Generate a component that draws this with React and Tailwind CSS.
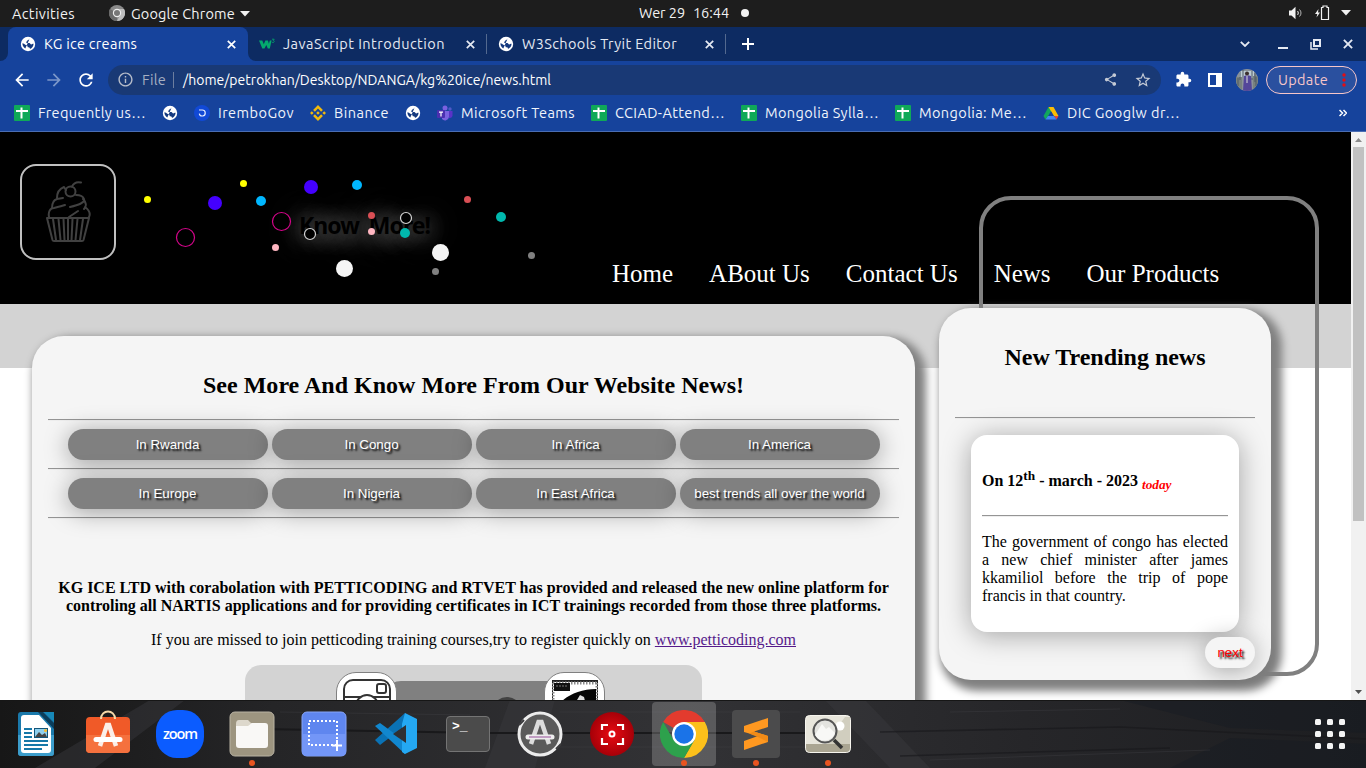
import React, { useLayoutEffect, useRef } from 'react';
import { MdShare, MdStarBorder, MdExtension, MdArrowBack, MdArrowForward, MdRefresh, MdInfoOutline } from 'react-icons/md';
import { SiBinance } from 'react-icons/si';

// Single line of text whose letter spacing is tuned to fill a set width.
function Fit({ w, className = '', children }) {
  const ref = useRef(null);
  useLayoutEffect(() => {
    const el = ref.current;
    el.style.letterSpacing = '0px';
    const n = el.textContent.length;
    el.style.letterSpacing = (w - el.getBoundingClientRect().width) / n + 'px';
  }, [w, children]);
  return (
    <span className="block shrink-0" style={{ width: w }}>
      <span ref={ref} className={'inline-block whitespace-pre ' + className}>{children}</span>
    </span>
  );
}

function Globe({ className = '' }) {
  return (
    <svg className={className} width="16" height="16" viewBox="0 0 16 16">
      <circle cx="8" cy="8" r="7.200" fill="#fff" />
      <path d="M9.800 2.200c0 1.200-.9 1.500-1.800 1.900-.8.400-.6 1.200-1.300 1.500-.8.300-.6 1.100 0 1.300h2.600c1 .1 1 1.500 2 1.500.8 0 1.200-.7 2.300-.6-.1 2.300-1.600 4.400-3.700 5.300.3-1.200-.5-1.700-1.400-1.800-.9 0-1-.7-1-1.400 0-.8-1.400-.5-2.200-1.200-.9-.8-1.600-1.300-2.900-1.500 0 2.400 1.100 4.200 2.900 5.200" fill="#14397f" />
    </svg>
  );
}

function Cross({ size = 9, className = '' }) {
  return (
    <svg className={className} width={size} height={size} viewBox="0 0 9 9" fill="none" stroke="currentColor" strokeWidth="1.700"><path d="M.8.8l7.400 7.400M8.200.8L.8 8.200" /></svg>
  );
}

function TopBar() {
  return (
    <header className="relative flex h-[27px] shrink-0 items-center bg-[#1d1d1d] text-[14.5px] text-[#f2f2f2]">
      <div className="w-3" />
      <Fit w={63}>Activities</Fit>
      <svg className="mb-px ml-[34px] mr-1.5" width="16" height="16" viewBox="0 0 16 16">
        <circle cx="8" cy="8" r="8" fill="#8a8a8a" />
        <path d="M8 8 L1 4 A8 8 0 0 0 8 16Z" fill="#6b6b6b" />
        <path d="M8 4h7a8 8 0 0 1-7 12l3-6z" fill="#bdbdbd" />
        <circle cx="8" cy="8" r="4.2" fill="#eee" />
        <circle cx="8" cy="8" r="3" fill="#777" />
      </svg>
      <Fit w={104}>Google Chrome</Fit>
      <svg className="ml-[5px]" width="10" height="6"><path d="M0 0h10L5 5.5z" fill="#f2f2f2" /></svg>
      <div className="ml-[389px] flex items-center pb-[2px]">
        <Fit w={46}>Wer 29</Fit>
        <div className="w-2" />
        <Fit w={36}>16:44</Fit>
        <div className="ml-3 size-2 rounded-full bg-[#f2f2f2]" />
      </div>
      <div className="ml-auto flex items-center pb-px pr-[15px]">
        <svg className="mr-[11px]" width="16" height="14" viewBox="0 0 16 14" fill="none" stroke="#f2f2f2">
          <path d="M1 4.500h2.500L7.500 .8v12.400L3.500 9.500H1z" fill="#f2f2f2" stroke="none" />
          <path d="M9.500 5c1 1 1 3 0 4" /><path d="M11.500 3.500c2 2 2 5 0 7" stroke="#b5b5b5" />
        </svg>
        <svg width="16" height="16" viewBox="0 0 16 16" className="mr-2.5">
          <path d="M3.500 4L0 9h2.300L1.500 12.500 5 7.500H3z" fill="#f2f2f2" />
          <path d="M6.500 2.500h1.500v-1.500h4v1.500h1.500v12h-7z" fill="none" stroke="#f2f2f2" strokeWidth="1.200" />
        </svg>
        <svg width="10" height="6"><path d="M0 0h10L5 5.5z" fill="#f2f2f2" /></svg>
      </div>
    </header>
  );
}

function W3() {
  return (
    <svg className="shrink-0" width="16" height="16" viewBox="0 0 16 16">
      <path d="M0 4.500h3.300l1.500 3.800 1.600-3.800h2.500l1 3.300.9-3.300h1.800l-1.800 8H8.800L7.300 9l-1.800 3.500H3.300z" fill="#04aa6d" />
      <path d="M13 3.200h2.200l-1 1.300c1.400 0 1.400 2-.2 2-.6 0-.9-.2-1-.5" fill="none" stroke="#04aa6d" strokeWidth=".8" />
    </svg>
  );
}

function Tab({ icon, title, w, active }) {
  return (
    <div className={active
      ? 'flex h-[34px] w-[240px] items-center rounded-t-lg bg-[#16439c] pl-[12px] text-white'
      : 'flex h-[34px] w-[239px] items-center pl-[11px] text-[#e4e9f2]'}>
      <div className="mr-2 flex w-4 shrink-0 justify-center">{icon}</div>
      <Fit w={w} className="pb-[2px] text-[14.5px]">{title}</Fit>
      <Cross className="ml-auto mr-3" />
    </div>
  );
}

function TabStrip() {
  return (
    <div className="flex h-[34px] shrink-0 items-center bg-[#0d2b62] text-[#e4e9f2]">
      <div className="h-full w-2 bg-[#16439c]"><div className="h-full rounded-br-lg bg-[#0d2b62]" /></div>
      <Tab active icon={<Globe />} title="KG ice creams" w={93} />
      <div className="-mr-2 h-full w-2 bg-[#16439c]"><div className="h-full rounded-bl-lg bg-[#0d2b62]" /></div>
      <Tab icon={<W3 />} title="JavaScript Introduction" w={162} />
      <div className="-ml-px h-5 w-px bg-[#53698f]" />
      <Tab icon={<Globe />} title="W3Schools Tryit Editor" w={155} />
      <div className="-ml-px h-5 w-px bg-[#53698f]" />
      <svg className="ml-4" width="12" height="12"><path d="M6 0v12M0 6h12" stroke="#fff" strokeWidth="2" /></svg>
      <div className="ml-auto flex items-center pr-[13px]">
        <svg className="mr-[28px]" width="10" height="6" fill="none" stroke="#e4e9f2" strokeWidth="1.800"><path d="M.8.8L5 5 9.200.8" /></svg>
        <div className="mr-[22px] mt-2 h-[2px] w-[10px] bg-[#e4e9f2]" />
        <svg className="mr-[22px]" width="11" height="11" viewBox="0 0 11 11" fill="none" stroke="#e4e9f2" strokeWidth="2">
          <path d="M4 1h6v6H4z" /><path d="M1 3v7h7" strokeWidth="1.500" />
        </svg>
        <Cross size={10} />
      </div>
    </div>
  );
}

function Toolbar() {
  return (
    <div className="flex h-[37px] shrink-0 items-center bg-[#16439c] pl-3 text-[14.5px] text-white">
      <MdArrowBack size={20} />
      <MdArrowForward className="ml-3" size={20} color="#7c97c9" />
      <MdRefresh className="ml-3" size={20} />
      <div className="ml-3 flex h-[30px] w-[1053px] items-center rounded-full bg-[#193975] pl-[9px]">
        <MdInfoOutline size={17} color="#b7bdca" />
        <div className="w-2" />
        <Fit w={24} className="text-[#a5afc2]">File</Fit>
        <div className="ml-[7px] mr-[9px] h-4 w-px bg-[#6c7e9f]" />
        <Fit w={368} className="text-sm">/home/petrokhan/Desktop/NDANGA/kg%20ice/news.html</Fit>
        <MdShare className="ml-auto mr-4" size={15} color="#c4cad5" />
        <MdStarBorder className="mr-[9px]" size={18} color="#c4cad5" />
      </div>
      <MdExtension className="ml-[14px]" size={17} />
      <svg className="ml-[15px]" width="15" height="14"><path d="M1 0h14v14H1zM3 2v10h6V2z" fill="#fff" fillRule="evenodd" /></svg>
      <svg className="ml-[14px]" width="22" height="22" viewBox="0 0 22 22">
        <defs><clipPath id="av"><circle cx="11" cy="11" r="11" /></clipPath></defs>
        <g clipPath="url(#av)">
          <path d="M0 0h22v22H0z" fill="#8b9299" />
          <path d="M3 2h15v7H3z" fill="#bccbd2" />
          <path d="M0 8h6v14H0zM17 7h5v15h-5z" fill="#78827f" />
          <path d="M4 2v9M7 1v8M16 2v9M19 4v9M2 9v8M20 8v9" stroke="#4e5964" />
          <path d="M8 7l3-1 4 1 1 15H7z" fill="#54469a" />
          <path d="M11 6v8" stroke="#ddd" />
          <circle cx="11" cy="4.500" r="2" fill="#3b2d2c" />
        </g>
      </svg>
      <div className="ml-2 flex h-7 w-[91px] shrink-0 items-center rounded-full border border-[#f6c6c9] bg-[#2a509f] pl-[11px] text-[#f6c6c9]">
        <Fit w={50}>Update</Fit>
        <svg className="ml-[14px] shrink-0" width="4" height="14" fill="#e30d14"><circle cx="2" cy="2" r="1.700" /><circle cx="2" cy="7" r="1.700" /><circle cx="2" cy="12" r="1.700" /></svg>
      </div>
    </div>
  );
}

const Sheet = () => (
  <svg width="16" height="16"><rect width="16" height="16" rx="1" fill="#0fa958" /><path d="M2 6h12M7.500 2.500v11" stroke="#fff" strokeWidth="2" /></svg>
);
const Drive = () => (
  <svg width="16" height="16" viewBox="0 0 16 16">
    <path d="M5.500 2h5L5 11.500l-2.500 3L.5 11z" fill="#11a75c" />
    <path d="M5.500 2h5l5 9h-4.500z" fill="#fbbc04" />
    <path d="M11 11h4.500l-2 3.500z" fill="#ea4335" />
    <path d="M5 11h6l2.500 3.500h-11z" fill="#4285f4" />
    <path d="M8 6.500L10.500 11h-5z" fill="#16439c" />
  </svg>
);
const Teams = () => (
  <svg width="16" height="16" viewBox="0 0 16 16">
    <circle cx="8" cy="3" r="2.500" fill="#7b61e0" /><circle cx="13" cy="4" r="1.700" fill="#5059c9" />
    <path d="M5 6h7v6a4 4 0 0 1-7 2z" fill="#7b61e0" /><path d="M12 6h3.500v5a3 3 0 0 1-3.500 2z" fill="#5a33c8" />
    <rect x="0" y="5" width="8" height="8" rx="1" fill="#4b2fb0" /><path d="M2 7.200h4M4 7v4.500" stroke="#fff" strokeWidth="1.200" />
  </svg>
);
const Irembo = () => (
  <svg width="16" height="16" viewBox="0 0 16 16"><circle cx="8" cy="8" r="8" fill="#1149d6" /><path d="M5 5h3.200a3 3 0 1 1-2.900 3.600" fill="none" stroke="#e6edff" strokeWidth="1.200" /></svg>
);

const bookmarks = [
  [<Sheet />, 'Frequently us…', 108],
  [<Globe />],
  [<Irembo />, 'IremboGov', 76],
  [<SiBinance size={16} color="#f3ba0b" />, 'Binance', 55],
  [<Globe />],
  [<Teams />, 'Microsoft Teams', 114],
  [<Sheet />, 'CCIAD-Attend…', 110],
  [<Sheet />, 'Mongolia Sylla…', 114],
  [<Sheet />, 'Mongolia: Me…', 108],
  [<Drive />, 'DIC Googlw dr…', 113],
];

function Bookmarks() {
  return (
    <div className="flex h-[34px] shrink-0 items-center gap-4 border-b border-[#4a6db3] bg-[#16439c] pb-[3px] pl-[14px] text-[14.5px] text-[#f0f4fb]">
      {bookmarks.map(([icon, label, w], i) => (
        <div key={i} className="flex shrink-0 items-center gap-2">{icon}{label && <Fit w={w}>{label}</Fit>}</div>
      ))}
      <svg className="ml-auto mr-[19px]" width="8" height="8" viewBox="0 0 8 8" fill="none" stroke="#fff" strokeWidth="1.500"><path d="M.5 1l3 3-3 3M4.500 1l3 3-3 3" /></svg>
    </div>
  );
}

const dots = [
  [147.5, 67.5, 3.5, '#ffff00'], [243.5, 51.5, 3.5, '#ffff00'],
  [215, 71, 7, '#4400ff'], [311, 55, 7, '#4400ff'],
  [261, 69, 5, '#00b7ff'], [357, 53, 5, '#00b7ff'],
  [275.5, 115.5, 3.5, '#ffb6c1'], [371.5, 99.5, 3.5, '#ffb6c1'],
  [371.5, 83.5, 3.5, '#d94f55'], [467.5, 67.5, 3.5, '#d94f55'],
  [405, 101, 5, '#00b8ad'], [501, 85, 5, '#00b8ad'],
  [344.5, 136.5, 8.5, '#f5f5f5'], [440.5, 120.5, 8.5, '#f5f5f5'],
  [435.5, 139.5, 3.5, '#808080'], [531.5, 123.5, 3.5, '#808080'],
];
const rings = [[185.5, 105.5, 9, '#d4058a'], [281.5, 89.5, 9, '#d4058a'], [310, 102, 5.5, '#d3d3d3'], [406, 86, 5.5, '#d3d3d3']];

function SiteHeader() {
  return (
    <div className="relative flex h-[172px] shrink-0 bg-black pl-5 pt-8">
      <div className="flex size-24 items-center justify-center rounded-2xl border-2 border-[#c0c0c0]">
        <svg width="46" height="62" viewBox="0 0 46 62" fill="none" stroke="#414141" strokeWidth="2" strokeLinecap="round" strokeLinejoin="round">
          <path d="M2 37h42l-5.500 22q-.3 1-1.500 1H9q-1.200 0-1.500-1zM8 38l3 21M13.500 38l2 21M18.500 38l1 21M23 38v21M27.500 38l-1 21M32.500 38l-2 21M38 38l-3 21" />
          <path d="M4 36c-1-5 1-9 5-9 4-1 8-2 11-3M7 27c0-5 2-8 5-9l6-1M12 17c0-4 2-9 7-11l2 3M31 14c3 0 7 1 8 4 1 4-6 6-14 8M38 18c3 3 4 7 1 10M40 26c4 3 6 6 4 10M33 30l-9 6" />
          <circle cx="25.500" cy="10.500" r="5" /><path d="M27 5.500c2-4 5-5 9-4" />
        </svg>
      </div>
      <div className="ml-[183px] mt-[45px]">
        <Fit w={131} className="font-['Comic_Sans_MS','Noto_Sans',sans-serif] text-[23px] font-bold leading-8 text-black [text-shadow:0_2px_22px_#888,0_2px_34px_#666] [word-spacing:5px]">Know More!</Fit>
      </div>
      <svg className="absolute left-0 top-0" width="600" height="172">
        {dots.map(([x, y, r, c], i) => <circle key={i} cx={x} cy={y} r={r} fill={c} />)}
        {rings.map(([x, y, r, c], i) => <circle key={i} cx={x} cy={y} r={r} fill="#000" stroke={c} strokeWidth="1.200" />)}
      </svg>
      <nav className="ml-[182px] mt-[95px] flex gap-9 whitespace-nowrap font-['Liberation_Serif',serif] text-[25px] leading-[29px] text-white">
        <span>Home</span><span>ABout Us</span><span>Contact Us</span><span>News</span><span>Our Products</span>
      </nav>
    </div>
  );
}

const Hr = () => <div className="h-[2px] w-full border-b border-t border-b-[#eeeeee] border-t-[#959595]" />;

function Pill({ children }) {
  return (
    <button className="h-[31px] w-[200px] rounded-2xl bg-[#808080] pr-px font-['Liberation_Sans',sans-serif] text-[13.333px] text-white shadow-[0_3px_24px_rgba(0,0,0,0.36)] [text-shadow:2px_2px_2px_black]">{children}</button>
  );
}

function NewsPanel() {
  return (
    <section className="-mt-8 h-[500px] w-[883px] shrink-0 rounded-t-[32px] bg-[#f5f5f5] px-4 shadow-[6px_6px_8px_5px_gray]">
      <h2 className="flex h-[83px] items-center justify-center pt-[14px] text-2xl font-bold"><Fit w={541}>See More And Know More From Our Website News!</Fit></h2>
      <Hr />
      <div className="flex h-[47px] items-center gap-1 pl-5"><Pill>In Rwanda</Pill><Pill>In Congo</Pill><Pill>In Africa</Pill><Pill>In America</Pill></div>
      <Hr />
      <div className="flex h-[47px] items-center gap-1 pl-5"><Pill>In Europe</Pill><Pill>In Nigeria</Pill><Pill>In East Africa</Pill><Pill>best trends all over the world</Pill></div>
      <Hr />
      <p className="mt-[60px] text-center text-base font-bold leading-[18px]">KG ICE LTD with corabolation with PETTICODING and RTVET has provided and released the new online platform for<br />controling all NARTIS applications and for providing certificates in ICT trainings recorded from those three platforms.</p>
      <p className="mt-4 text-center text-base leading-[18px]">If you are missed to join petticoding training courses,try to register quickly on <span className="text-[#551a8b] underline">www.petticoding.com</span></p>
      <div className="mx-auto mt-4 flex h-24 w-[457px] rounded-t-2xl bg-[#d3d3d3] pl-[91px] pt-[7px]">
        <div className="z-10 size-[61px] shrink-0 rounded-[20px] border border-[#808080] bg-white p-[6px]">
          <svg width="48" height="48" viewBox="0 0 48 48" fill="none" stroke="#333" strokeWidth="2">
            <rect x="1" y="1" width="46" height="46" rx="9" /><path d="M1 18h46" /><rect x="34" y="5" width="9" height="9" rx="2" /><circle cx="24" cy="27" r="11" fill="#fff" />
          </svg>
        </div>
        <svg className="-mx-1 mt-[9px] shrink-0" width="155" height="60"><path d="M0 2q3-2 8-2h147v60H0z" fill="#808080" /><circle cx="114" cy="31" r="15" fill="#424242" /></svg>
        <div className="z-10 size-[61px] shrink-0 rounded-[20px] border border-[#808080] bg-white p-[7px]">
          <svg width="46" height="46" viewBox="0 0 46 46">
            <path d="M0 1h46v45H0z" fill="#fff" stroke="#222" strokeWidth="2" />
            <path d="M1 3h44M1 3v43M45 3v43" stroke="#888" strokeWidth="3" strokeDasharray="1.500 1.500" />
            <path d="M2 3h16v8H2z" fill="#111" /><path d="M4 6h12" stroke="#777" strokeDasharray="2 1" />
            <path d="M9 22C17 14 30 9 44 9v18H8z" fill="#050505" /><path d="M25 20l3-5 4 2 1 4z" fill="#ddd" />
          </svg>
        </div>
      </div>
    </section>
  );
}

function TrendingPanel() {
  return (
    <aside className="z-10 -mt-[60px] ml-6 h-[372px] w-[332px] shrink-0 rounded-[32px] bg-[#f5f5f5] pl-4 shadow-[6px_6px_8px_5px_gray]">
      <h2 className="flex h-[109px] w-[300px] items-center justify-center pb-[11px] text-2xl font-bold"><Fit w={201}>New Trending news</Fit></h2>
      <div className="w-[300px]"><Hr /></div>
      <div className="ml-4 mt-4 h-[197px] w-[268px] rounded-2xl bg-white px-[11px] pt-[32px] shadow-[0_3px_28px_rgba(0,0,0,0.34)]">
        <h3 className="h-[48px] whitespace-nowrap text-base font-bold leading-7">On 12<sup className="top-[-0.45em] text-[13.3px]">th</sup> - march - 2023 <sub className="text-[13.3px] italic text-[#ff0000]">today</sub></h3>
        <Hr />
        <p className="mt-4 text-justify text-base leading-[18px]">The government of congo has elected a new chief minister after james kkamiliol before the trip of pope francis in that country.</p>
      </div>
      <button className="ml-[250px] mt-[5px] block h-[31px] w-[50px] rounded-2xl bg-[#f5f5f5] font-['Liberation_Sans',sans-serif] text-[13.333px] text-[#ff0000] shadow-[0_3px_24px_rgba(0,0,0,0.33)] [text-shadow:2px_2px_2px_black]">next</button>
    </aside>
  );
}

function Page() {
  return (
    <main className="flex h-[568px] shrink-0 overflow-hidden bg-white font-['Liberation_Serif',serif] text-black">
      <div className="relative flex w-[1351px] flex-col overflow-hidden">
        <SiteHeader />
        <div className="h-16 shrink-0 bg-[#d3d3d3]" />
        <div className="absolute left-[979px] top-[64px] h-[480px] w-[340px] rounded-[32px] border-4 border-[#808080]" />
        <div className="z-10 flex items-start pl-8">
          <NewsPanel />
          <TrendingPanel />
        </div>
      </div>
      <div className="flex w-[15px] flex-col items-center bg-[#f1f1f1]">
        <svg width="15" height="15"><path d="M4 10h7L7.500 6z" fill="#8a8a8a" /></svg>
        <div className="h-[374px] w-[11px] bg-[#c1c1c1]" />
        <svg className="mt-auto" width="15" height="15"><path d="M4 5h7l-3.500 4z" fill="#505050" /></svg>
      </div>
    </main>
  );
}

const Writer = () => (
  <svg width="36" height="44" viewBox="0 0 36 44">
    <rect width="36" height="44" rx="3" fill="#1a79ab" /><path d="M0 23h36v18q0 3-3 3H3q-3 0-3-3z" fill="#3c9dcb" />
    <path d="M3 6q0-3 3-3h15l12 13v22q0 3-3 3H6q-3 0-3-3z" fill="#fff" /><path d="M20 0l16 17V11L25 0z" fill="#0b3d5b" /><path d="M26 0h10v10z" fill="#1788b8" />
    <path d="M6 17h8M6 21h8M6 25h8M6 29h24M6 33h24M6 37h18" stroke="#1678a8" strokeWidth="2" />
    <rect x="16.500" y="16.500" width="13" height="9" fill="#8fd0ee" stroke="#12557a" /><path d="M17 25l4-5 3 3 3-2 2 4z" fill="#444" /><circle cx="27.500" cy="18.500" r="1.500" fill="#f8b92b" />
  </svg>
);
const Software = () => (
  <svg className="-mt-1" width="46" height="44" viewBox="0 0 46 44">
    <rect x="1" y="7" width="44" height="36" rx="4" fill="#f05a28" /><path d="M1 25h44v14q0 4-4 4H5q-4 0-4-4z" fill="#f5713e" />
    <path d="M16 9c0-10 14-10 14 0" fill="none" stroke="#f6d9a8" strokeWidth="2" />
    <path d="M15 36l7-21h2l7 21" fill="none" stroke="#fbeee8" strokeWidth="4.500" /><path d="M11 29.500h24" stroke="#fff" strokeWidth="5" strokeLinecap="round" />
  </svg>
);
const Zoom = () => (
  <div className="flex size-12 items-center justify-center rounded-[21px] bg-[#0b5cff] pb-0.5 font-['Open_Sans',sans-serif]"><Fit w={34} className="text-[14.5px] font-semibold leading-4 text-white">zoom</Fit></div>
);
const Files = () => (
  <svg width="46" height="46" viewBox="0 0 46 46"><rect x="1" y="1" width="44" height="44" rx="5" fill="#9d9580" stroke="#b9b3a3" />
    <path d="M7 13q0-4 3-4h9l3 3h14v6H7z" fill="#ddd8cc" /><path d="M7 15h12l4-3h13q3 0 3 3v19q0 3-3 3H10q-3 0-3-3z" fill="#f9f8f6" /></svg>
);
const Capture = () => (
  <svg width="46" height="46" viewBox="0 0 46 46"><rect x="1" y="1" width="44" height="44" rx="5" fill="#5f86ef" stroke="#87a5f8" /><path d="M1 23h44v18q0 4-4 4H5q-4 0-4-4z" fill="#7396f7" />
    <rect x="8" y="10" width="28" height="24" fill="none" stroke="#fff" strokeWidth="2" strokeDasharray="2 2" /><path d="M36 29v11M31 34.500h10" stroke="#fff" strokeWidth="2" /></svg>
);
const Code = () => (
  <svg width="44" height="44" viewBox="0 0 44 44"><path d="M1 28L31 1l1 12L6 33z" fill="#0a72b5" /><path d="M1 14l5-3 26 19-1 12z" fill="#1187cf" /><path d="M31 1l12 6v29l-12 6-3-2V12z" fill="#24a8f2" /><path d="M32 13v18L19 22z" fill="#303033" /></svg>
);
const Term = () => (
  <div className="flex h-9 w-11 rounded border border-[#747474] bg-[#4b4b4b] pl-[5px] pt-0.5 font-['Liberation_Mono',monospace] text-[13px] font-bold leading-4 text-white">&gt;_</div>
);
const Updater = () => (
  <svg width="46" height="46" viewBox="0 0 46 46"><circle cx="23" cy="23" r="21" fill="#5a5a5a" stroke="#ececec" strokeWidth="3" /><path d="M2 14l5-5M39 38l5-5" stroke="#3b3b3d" strokeWidth="2" /><path d="M14 33l7.500-22h3l7.500 22" fill="none" stroke="#ddd" strokeWidth="4.500" /><path d="M11 26h24" stroke="#eee" strokeWidth="5" strokeLinecap="round" /><path d="M12 26h22" stroke="#954f99" /></svg>
);
const Recorder = () => (
  <svg width="44" height="44" viewBox="0 0 44 44"><defs><radialGradient id="rg"><stop offset="0" stopColor="#e80b12" /><stop offset="1" stopColor="#a60008" /></radialGradient></defs><circle cx="22" cy="22" r="22" fill="url(#rg)" />
    <path d="M12 18v-5h6M27 13h6v5M33 26v6h-6M18 32h-6v-6" fill="none" stroke="#fff" strokeWidth="2.200" /><circle cx="22" cy="22" r="2.500" fill="none" stroke="#fff" strokeWidth="2" /></svg>
);
const Chrome = () => (
  <svg width="48" height="48" viewBox="0 0 48 48"><path d="M24 24L3.200 12A24 24 0 0 1 44.800 12z" fill="#e33b2e" /><path d="M24 12h20.800A24 24 0 0 1 24 48l10.400-18z" fill="#fcc01b" /><path d="M3.200 12A24 24 0 0 0 24 48l10.400-18H13.600z" fill="#2da14c" />
    <circle cx="24" cy="24" r="12" fill="#fff" /><circle cx="24" cy="24" r="9.700" fill="#1a73e8" /></svg>
);
const Sublime = () => (
  <div className="flex size-12 items-center justify-center rounded-sm bg-[#4b4b4c]"><svg width="24" height="32" viewBox="0 0 24 32"><path d="M0 8l24-8v9l-14 4.500 14 4.500v6L0 32v-9l14-5L0 14z" fill="#ff9820" /><path d="M24 24v-6l-14-4.500-5 2 10 4z" fill="#f08a17" /></svg></div>
);
const Viewer = () => (
  <svg width="46" height="38" viewBox="0 0 46 38"><rect x=".5" y=".5" width="45" height="37" rx="4" fill="#e8e6dc" stroke="#f7f5ee" /><path d="M23 25L40 2h5v27H23z" fill="#d1cebf" /><path d="M1 29h44v4q0 4-4 4H5q-4 0-4-4z" fill="#aaa592" /><circle cx="35" cy="11" r="4.500" fill="#fff" />
    <circle cx="20" cy="16" r="11.500" fill="#e3e3df" stroke="#555" strokeWidth="2" /><path d="M10 20l7-11 4 5 3-2 6 6a11 11 0 0 1-20 2z" fill="#f8f8f6" /><path d="M29 25l8 8" stroke="#333" strokeWidth="3.500" /></svg>
);

const apps = [[Writer], [Software], [Zoom], [Files, true], [Capture], [Code], [Term], [Updater], [Recorder], [Chrome, true, true], [Sublime, true], [Viewer, true]];

function Dock() {
  return (
    <footer className="relative h-[68px] shrink-0 overflow-hidden bg-[#29292c]">
      <svg className="absolute inset-0" width="1366" height="68">
        <defs><linearGradient id="wood"><stop offset="0" stopColor="#171717" /><stop offset=".2" stopColor="#252527" /><stop offset=".5" stopColor="#323235" /><stop offset=".75" stopColor="#262629" /><stop offset="1" stopColor="#1d1e21" /></linearGradient></defs>
        <path d="M0 0h1366v68H0z" fill="url(#wood)" />
        <path d="M150 0h35L95 68H35zM510 0h45l-20 68h-50zM825 0h40l65 68h-40z" fill="#3a3a3d" opacity=".45" />
        <path d="M260 29l225 4h365" fill="none" stroke="#19191b" strokeWidth="2" />
        <path d="M880 32l240-5 246 12M900 56l270-8" fill="none" stroke="#18181a" strokeWidth="1.500" opacity=".6" />
        <path d="M1120 0l110 28 136 5V0zM1170 68l60-30 136 6v24z" fill="#141b22" opacity=".35" />
        <path d="M280 12l190 3M560 12h240M560 47h260M950 12l170-3M930 60l280-10" stroke="#444449" opacity=".35" />
        <path d="M0 .5h1366" stroke="#161616" />
      </svg>
      <div className="relative flex h-full">
        {apps.map(([Icon, running, active], i) => (
          <div key={i} className="flex w-[72px] justify-center pt-0.5">
            <div className={active ? 'relative flex size-16 items-center justify-center rounded bg-white/20' : 'relative flex size-16 items-center justify-center'}>
              <Icon />
              {running && <i className="absolute bottom-0 left-[29px] size-[6px] rounded-full bg-[#e95420]" />}
            </div>
          </div>
        ))}
        <div className="ml-auto mr-[21px] mt-[19px] grid h-[30px] w-[30px] grid-cols-3 gap-[6px]">
          {Array.from({ length: 9 }, (_, i) => <i key={i} className="size-[6px] rounded-[1.5px] bg-[#f4f4f4]" />)}
        </div>
      </div>
    </footer>
  );
}

export default function App() {
  return (
    <div className="flex h-[768px] w-[1366px] flex-col overflow-hidden font-['Ubuntu','Noto_Sans',sans-serif]">
      <TopBar />
      <TabStrip />
      <Toolbar />
      <Bookmarks />
      <Page />
      <Dock />
    </div>
  );
}
